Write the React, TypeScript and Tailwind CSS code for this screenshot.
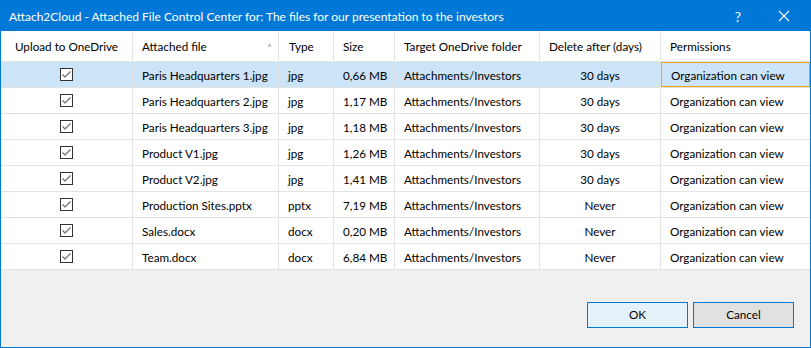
import React from "react";

const rows = [
  ["Paris Headquarters 1.jpg", "jpg", "0,66 MB", "30 days"],
  ["Paris Headquarters 2.jpg", "jpg", "1,17 MB", "30 days"],
  ["Paris Headquarters 3.jpg", "jpg", "1,18 MB", "30 days"],
  ["Product V1.jpg", "jpg", "1,26 MB", "30 days"],
  ["Product V2.jpg", "jpg", "1,41 MB", "30 days"],
  ["Production Sites.pptx", "pptx", "7,19 MB", "Never"],
  ["Sales.docx", "docx", "0,20 MB", "Never"],
  ["Team.docx", "docx", "6,84 MB", "Never"],
];

function Check() {
  return (
    <svg width="13" height="13" viewBox="0 0 13 13">
      <rect x="0.5" y="0.5" width="12" height="12" fill="white" stroke="#333" />
      <path d="M2.5 6.5 L5 9 L10.5 3.5" fill="none" stroke="#666" strokeWidth="1.1" />
    </svg>
  );
}

export default function App() {
  return (
    <div
      className="w-[811px] h-[348px] bg-[#0078d7] p-px flex flex-col text-[11.7px] text-black whitespace-nowrap"
      style={{ fontFamily: 'Lato, "Noto Sans", sans-serif' }}
    >
      <div className="h-[30px] flex items-center text-white shrink-0">
        <div className="pl-[8px] flex-1 text-[12px] pt-px">
          Attach2Cloud - Attached File Control Center for: The files for our presentation to the investors
        </div>
        <div className="w-[46px] text-center text-[14px]">?</div>
        <div className="w-[46px] flex justify-center mr-[3px]">
          <svg width="12" height="12" viewBox="0 0 12 12">
            <path d="M1 1 L11 11 M11 1 L1 11" stroke="white" strokeWidth="1.1" />
          </svg>
        </div>
      </div>
      <div className="flex-1 bg-[#f0f0f0] flex flex-col">
        <div className="bg-white">
          <div className="flex h-[31px] border-b border-[#e3e3e3] items-center">
            <div className="w-[132px] h-full border-r border-[#e3e3e3] flex items-center justify-center pt-[2px]">Upload to OneDrive</div>
            <div className="w-[146px] h-full border-r border-[#e3e3e3] flex items-center pl-[9px] pr-[6px] justify-between pt-[2px]">
              <span>Attached file</span>
              <span className="text-[8px] text-[#777]">^</span>
            </div>
            <div className="w-[55px] h-full border-r border-[#e3e3e3] flex items-center pl-[10px] pt-[2px]">Type</div>
            <div className="w-[61px] h-full border-r border-[#e3e3e3] flex items-center pl-[9px] pt-[2px]">Size</div>
            <div className="w-[145px] h-full border-r border-[#e3e3e3] flex items-center pl-[9px] pt-[2px]">Target OneDrive folder</div>
            <div className="w-[121px] h-full border-r border-[#e3e3e3] flex items-center pl-[9px] pt-[2px]">Delete after (days)</div>
            <div className="flex-1 h-full flex items-center pl-[9px] pt-[2px]">Permissions</div>
          </div>
          {rows.map((r, i) => {
            const sel = i === 0;
            return (
              <div key={i} className={`flex h-[26px] border-b border-[#e3e3e3] ${sel ? "bg-[#cce4f7]" : ""}`}>
                <div className="w-[132px] h-full border-r border-[#e3e3e3] flex items-center justify-center"><Check /></div>
                <div className="w-[146px] h-full border-r border-[#e3e3e3] flex items-center pl-[9px] pt-[2px]">{r[0]}</div>
                <div className="w-[55px] h-full border-r border-[#e3e3e3] flex items-center pl-[9px] pt-[2px]">{r[1]}</div>
                <div className="w-[61px] h-full border-r border-[#e3e3e3] flex items-center pl-[9px] pt-[2px]">{r[2]}</div>
                <div className="w-[145px] h-full border-r border-[#e3e3e3] flex items-center pl-[9px] pt-[2px]">Attachments/Investors</div>
                <div className="w-[121px] h-full border-r border-[#e3e3e3] flex items-center justify-center pt-[2px]">{r[3]}</div>
                <div className={`flex-1 h-full flex items-center pl-[9px] pt-[2px] ${sel ? "border border-[#f0a30a] -mb-px pl-[8px]" : ""}`}>Organization can view</div>
              </div>
            );
          })}
        </div>
        <div className="flex-1 flex items-end justify-end pb-[19px] pr-[16px] gap-[5px]">
          <button className="w-[101px] h-[26px] bg-[#e5f1fb] border border-[#0078d7]">OK</button>
          <button className="w-[101px] h-[26px] bg-[#e1e1e1] border border-[#0078d7]">Cancel</button>
        </div>
      </div>
    </div>
  );
}
